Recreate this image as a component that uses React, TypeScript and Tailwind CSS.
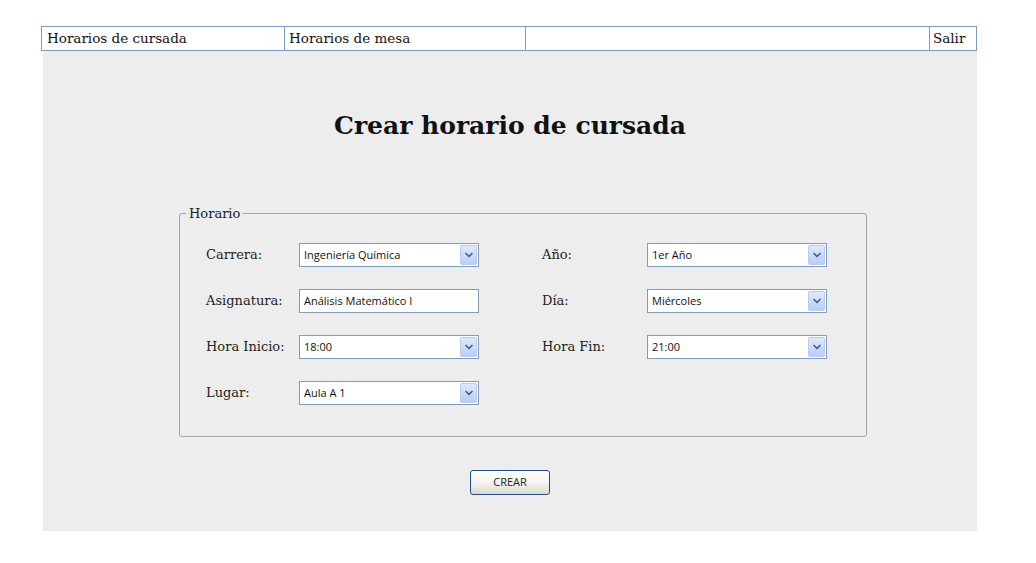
import { ChevronDown } from 'lucide-react'

const serif = { fontFamily: '"DejaVu Serif", "Liberation Serif", serif' }

function Select({ value }: { value: string }) {
  return (
    <div className="flex h-[24px] w-[180px] items-center border border-[#7f9db9] bg-white pl-[4px] pr-[1px]">
      <span className="flex-1 text-[11px] text-[#111] [font-family:'Open_Sans',sans-serif]">{value}</span>
      <div className="flex h-[20px] w-[17px] items-center justify-center rounded-[2px] border border-[#b9c9ef] bg-gradient-to-b from-[#dfe8fd] to-[#b9cdf8]">
        <ChevronDown className="h-[12px] w-[12px] text-[#4d6185]" strokeWidth={3.5} />
      </div>
    </div>
  )
}

function Input({ value }: { value: string }) {
  return (
    <div className="flex h-[24px] w-[180px] items-center border border-[#7f9db9] bg-white pl-[4px]">
      <span className="text-[11px] text-[#111] [font-family:'Open_Sans',sans-serif]">{value}</span>
    </div>
  )
}

function Label({ text }: { text: string }) {
  return (
    <span className="text-[13px] text-[#222]" style={serif}>
      {text}
    </span>
  )
}

export default function App() {
  return (
    <div className="min-h-[563px] bg-white pt-[26px]">
      <div className="ml-[41px] w-[936px]">
        <div className="grid h-[25px] grid-cols-[243px_241px_404px_48px] border border-[#7a9cc6] bg-white text-[13.5px] text-[#111]" style={serif}>
          <div className="flex items-center border-r border-[#7a9cc6] pl-[5px]">Horarios de cursada</div>
          <div className="flex items-center border-r border-[#7a9cc6] pl-[4px]">Horarios de mesa</div>
          <div className="border-r border-[#7a9cc6]" />
          <div className="flex items-center pl-[3px]">Salir</div>
        </div>
        <div className="ml-[2px] h-[480px] bg-[#ededed] pt-[56px]">
          <h1 className="text-center text-[25px] font-bold text-[#111]" style={serif}>
            Crear horario de cursada
          </h1>
          <fieldset className="ml-[136px] mt-[59px] h-[233px] w-[688px] rounded-[3px] border border-[#a5a59b] px-[26px] pt-[20px]">
            <legend className="-ml-[20px] px-[3px] text-[13px] text-[#222]" style={serif}>
              Horario
            </legend>
            <div className="flex">
              <div className="grid grid-cols-[93px_180px] items-center gap-y-[22px]">
                <Label text="Carrera:" />
                <Select value="Ingeniería Química" />
                <Label text="Asignatura:" />
                <Input value="Análisis Matemático I" />
                <Label text="Hora Inicio:" />
                <Select value="18:00" />
                <Label text="Lugar:" />
                <Select value="Aula A 1" />
              </div>
              <div className="ml-[63px] grid h-fit grid-cols-[105px_180px] items-center gap-y-[22px]">
                <Label text="Año:" />
                <Select value="1er Año" />
                <Label text="Día:" />
                <Select value="Miércoles" />
                <Label text="Hora Fin:" />
                <Select value="21:00" />
              </div>
            </div>
          </fieldset>
          <div className="mt-[33px] flex justify-center">
            <button className="h-[25px] w-[80px] rounded-[3px] border border-[#1c4f8a] bg-gradient-to-b from-white via-[#f5f4f0] to-[#dcd9cf] text-[11px] text-[#222] [font-family:'Open_Sans',sans-serif]">
              CREAR
            </button>
          </div>
        </div>
      </div>
    </div>
  )
}
